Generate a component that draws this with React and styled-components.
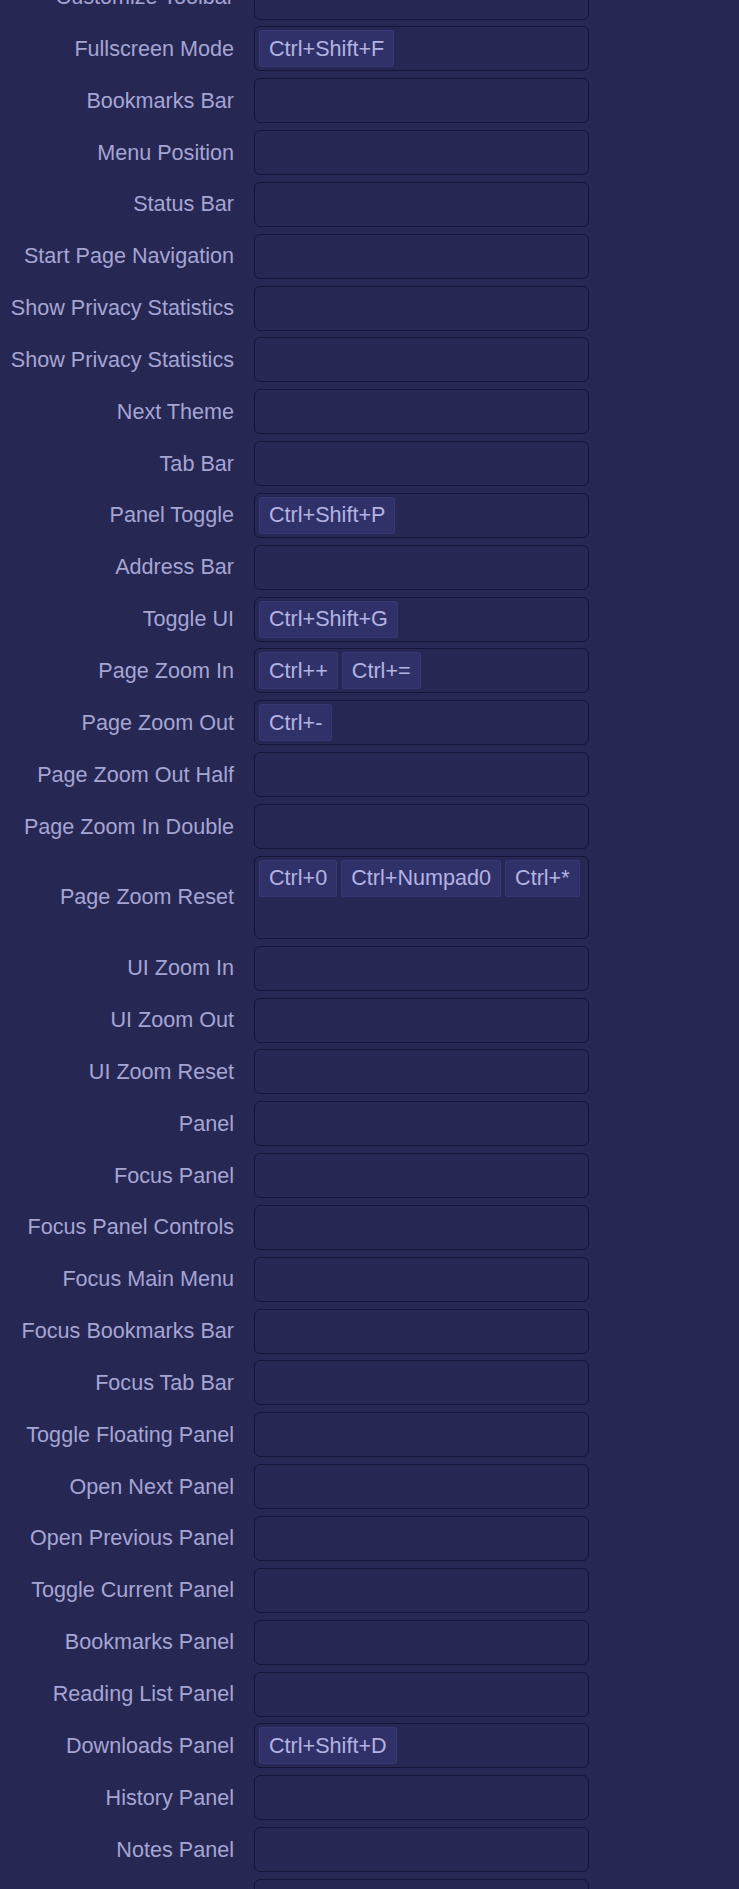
import React from "react";
import styled, { createGlobalStyle } from "styled-components";

const shortcuts = [
	{ label: "Customize Toolbar", keys: [] },
	{ label: "Fullscreen Mode", keys: ["Ctrl+Shift+F"] },
	{ label: "Bookmarks Bar", keys: [] },
	{ label: "Menu Position", keys: [] },
	{ label: "Status Bar", keys: [] },
	{ label: "Start Page Navigation", keys: [] },
	{ label: "Show Privacy Statistics", keys: [] },
	{ label: "Show Privacy Statistics", keys: [] },
	{ label: "Next Theme", keys: [] },
	{ label: "Tab Bar", keys: [] },
	{ label: "Panel Toggle", keys: ["Ctrl+Shift+P"] },
	{ label: "Address Bar", keys: [] },
	{ label: "Toggle UI", keys: ["Ctrl+Shift+G"] },
	{ label: "Page Zoom In", keys: ["Ctrl++", "Ctrl+="] },
	{ label: "Page Zoom Out", keys: ["Ctrl+-"] },
	{ label: "Page Zoom Out Half", keys: [] },
	{ label: "Page Zoom In Double", keys: [] },
	{ label: "Page Zoom Reset", keys: ["Ctrl+0", "Ctrl+Numpad0", "Ctrl+*"] },
	{ label: "UI Zoom In", keys: [] },
	{ label: "UI Zoom Out", keys: [] },
	{ label: "UI Zoom Reset", keys: [] },
	{ label: "Panel", keys: [] },
	{ label: "Focus Panel", keys: [] },
	{ label: "Focus Panel Controls", keys: [] },
	{ label: "Focus Main Menu", keys: [] },
	{ label: "Focus Bookmarks Bar", keys: [] },
	{ label: "Focus Tab Bar", keys: [] },
	{ label: "Toggle Floating Panel", keys: [] },
	{ label: "Open Next Panel", keys: [] },
	{ label: "Open Previous Panel", keys: [] },
	{ label: "Toggle Current Panel", keys: [] },
	{ label: "Bookmarks Panel", keys: [] },
	{ label: "Reading List Panel", keys: [] },
	{ label: "Downloads Panel", keys: ["Ctrl+Shift+D"] },
	{ label: "History Panel", keys: [] },
	{ label: "Notes Panel", keys: [] },
	{ label: "Mail Panel", keys: [] },
];

const App = () => {
	return (
		<>
			<GlobalStyle />
			<Form>
				{shortcuts.map((item, i) => (
					<React.Fragment key={i}>
						<Label>{item.label}</Label>
						<KeyBox>
							{item.keys.map((k) => (
								<Chip key={k}>{k}</Chip>
							))}
							<KeyInput type="text" aria-label={item.label} />
						</KeyBox>
					</React.Fragment>
				))}
			</Form>
		</>
	);
};

const GlobalStyle = createGlobalStyle`
	html, body {
		margin: 0;
		padding: 0;
		background: #272753;
		overflow: hidden;
	}
	body {
		font-family: "Liberation Sans", Arial, sans-serif;
	}
`;

const Form = styled.div`
	display: grid;
	grid-template-columns: 234px 335px;
	column-gap: 20px;
	row-gap: 6.85px;
	align-items: center;
	margin-top: -25.5px;
	font-size: 21.6px;
`;

const Label = styled.div`
	text-align: right;
	color: #a5a5d4;
	white-space: nowrap;
`;

const KeyBox = styled.div`
	box-sizing: border-box;
	min-height: 45px;
	display: flex;
	flex-wrap: wrap;
	align-items: flex-start;
	gap: 1px 4px;
	padding: 3px 3px 3px 4px;
	border: 1px solid #15153a;
	border-radius: 6px;
	background: #272753;
`;

const Chip = styled.span`
	box-sizing: border-box;
	height: 37px;
	display: inline-flex;
	align-items: center;
	padding: 0 9px;
	background: #31316a;
	border: 1px solid #373775;
	border-radius: 2px;
	color: #b3b3e2;
	white-space: nowrap;
`;

const KeyInput = styled.input`
	flex: 1;
	min-width: 60px;
	height: 37px;
	padding: 0;
	border: none;
	outline: none;
	background: transparent;
	color: #b3b3e2;
	font: inherit;
`;

export default App;
